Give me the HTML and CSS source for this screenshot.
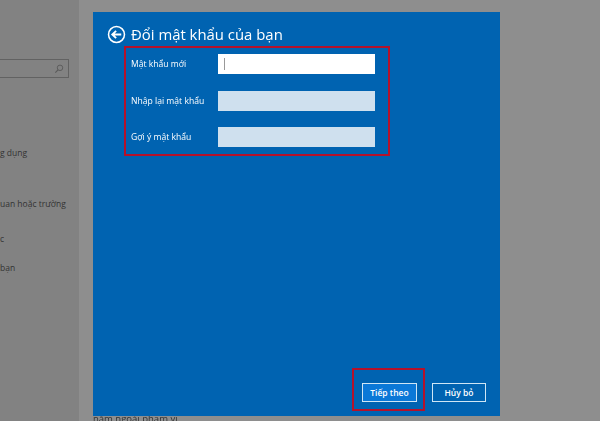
FILE: index.html
```html
<!DOCTYPE html>
<html lang="vi">

<head>
<meta charset="UTF-8">
<meta name="viewport" content="width=device-width, initial-scale=1.0">
<title>Đổi mật khẩu của bạn</title>
<link rel="stylesheet" href="styles.css">
</head>

<body>

<div class="screen">
    <aside class="sidebar">
        <div class="search-box">
            <svg class="search-icon" viewBox="0 0 12 12" width="10" height="10">
                <circle cx="7.2" cy="4.6" r="3.3" fill="none" stroke="#5a5a5a" stroke-width="1.1"/>
                <path d="M4.8 7 L1.6 10.4" fill="none" stroke="#5a5a5a" stroke-width="1.3"/>
            </svg>
        </div>
        <ul class="side-menu">
            <li class="side-apps">g dụng</li>
            <li class="side-work">uan hoặc trường</li>
            <li class="side-other">c</li>
            <li class="side-you">bạn</li>
        </ul>
    </aside>

    <main class="stage">
        <section class="dialog">
            <div class="dialog-title">
                <svg class="back-icon" viewBox="0 0 20 20" width="19" height="19">
                    <circle cx="10" cy="10" r="8.4" fill="none" stroke="#fff" stroke-width="1.6"/>
                    <path d="M15 10 H6 M9.6 6.2 L5.6 10 L9.6 13.8" fill="none" stroke="#fff" stroke-width="2"/>
                </svg>
                <h1>Đổi mật khẩu của bạn</h1>
            </div>

            <form class="pw-form">
                <div class="form-row">
                    <label>Mật khẩu mới</label>
                    <div class="field field-active"><span class="caret"></span></div>
                </div>
                <div class="form-row">
                    <label>Nhập lại mật khẩu</label>
                    <div class="field"></div>
                </div>
                <div class="form-row">
                    <label>Gợi ý mật khẩu</label>
                    <div class="field"></div>
                </div>
                <div class="red-box form-mark"></div>
            </form>

            <div class="dialog-actions">
                <button type="button" class="btn btn-next">Tiếp theo<span class="red-box next-mark"></span></button>
                <button type="button" class="btn btn-cancel">Hủy bỏ</button>
            </div>
        </section>
        <p class="below-text">nằm ngoài phạm vi</p>
    </main>
</div>

</body>

</html>
```

FILE: styles.css
```css
html, body {
    margin: 0;
    height: 100%;
}

body {
    font-family: "Open Sans", "Noto Sans", sans-serif;
    background-color: #8e8e8e;
    overflow: hidden;
}

.screen {
    display: flex;
    height: 421px;
    filter: blur(0.35px);
}

/* dimmed settings list on the left */
.sidebar {
    width: 79px;
    background-color: #828282;
    padding-top: 59px;
    box-sizing: border-box;
    overflow: hidden;
}

.search-box {
    width: 69px;
    height: 19px;
    box-sizing: border-box;
    border: 1px solid #626262;
    border-left: 0;
    display: flex;
    align-items: center;
    justify-content: flex-end;
    padding-right: 4px;
}

.side-menu {
    list-style: none;
    margin: 0;
    padding: 0;
    font-size: 8.5px;
    line-height: 12px;
    color: #333333;
    white-space: nowrap;
}

.side-apps { margin-top: 69px; }
.side-work { margin-top: 39px; }
.side-other { margin-top: 23px; }
.side-you { margin-top: 17px; }

.stage {
    flex: 1;
    padding: 12px 0 0 14px;
}

/* blue wizard panel */
.dialog {
    position: relative;
    width: 407px;
    height: 404px;
    box-sizing: border-box;
    background-color: #0063b1;
    color: #ffffff;
    padding: 11px 14px 0;
    display: flex;
    flex-direction: column;
}

.dialog-title {
    display: flex;
    align-items: center;
    gap: 5px;
    height: 22px;
}

.dialog-title h1 {
    margin: 0;
    font-size: 14.9px;
    font-weight: 400;
}

.pw-form {
    position: relative;
    margin-top: 9px;
    padding-left: 24px;
}

.form-row {
    display: flex;
    align-items: center;
    height: 20px;
    margin-bottom: 16.5px;
}

.form-row label {
    width: 87px;
    font-size: 8.6px;
}

.field {
    width: 157px;
    height: 20px;
    background-color: #cfe0ee;
    display: flex;
    align-items: center;
    padding-left: 6px;
    box-sizing: border-box;
}

.field-active {
    background-color: #ffffff;
}

.caret {
    width: 1px;
    height: 12px;
    background-color: #999999;
}

.red-box {
    position: absolute;
    box-sizing: border-box;
    border: 2px solid #b5122b;
    pointer-events: none;
}

.form-mark {
    left: 17px;
    top: -8px;
    width: 266px;
    height: 110px;
}

.dialog-actions {
    margin-top: auto;
    margin-bottom: 14px;
    display: flex;
    justify-content: flex-end;
    gap: 15px;
}

.btn {
    position: relative;
    height: 19px;
    padding: 0;
    box-sizing: border-box;
    border: 1px solid #cfe6f5;
    background-color: #0063b1;
    color: #ffffff;
    font-family: inherit;
    font-size: 8.5px;
    font-weight: 600;
}

.btn-next {
    width: 55px;
    background-color: #0a78d7;
}

.btn-cancel {
    width: 54px;
}

.next-mark {
    left: -11px;
    top: -16px;
    width: 73px;
    height: 43px;
}

.below-text {
    margin: 0;
    font-size: 9.5px;
    line-height: 6px;
    color: #333333;
}
```
